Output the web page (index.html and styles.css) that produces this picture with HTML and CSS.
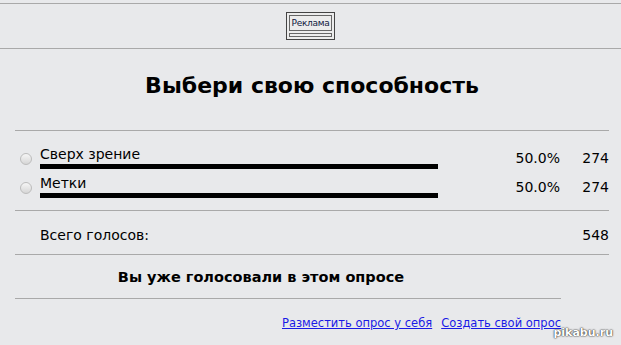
FILE: index.html
```html
<!DOCTYPE html>
<html lang="ru">
<head>
<meta charset="UTF-8">
<link rel="stylesheet" href="styles.css">
<title>Опрос</title>
</head>
<body>

<div class="ad-strip">
  <div class="ad-box">
    <div class="ad-label">Реклама</div>
    <div class="ad-bar"></div>
  </div>
</div>

<div class="poll">
  <h1 class="poll-title">Выбери свою способность</h1>

  <div class="answers">
    <div class="answer">
      <span class="radio"></span>
      <div class="answer-main">
        <div class="answer-text">Сверх зрение</div>
        <div class="bar" style="width:398px"></div>
      </div>
      <span class="percent">50.0%</span>
      <span class="count">274</span>
    </div>
    <div class="answer">
      <span class="radio"></span>
      <div class="answer-main">
        <div class="answer-text">Метки</div>
        <div class="bar" style="width:398px"></div>
      </div>
      <span class="percent">50.0%</span>
      <span class="count">274</span>
    </div>
  </div>

  <div class="total">
    <span>Всего голосов:</span>
    <span>548</span>
  </div>

  <div class="voted">
    <div class="voted-text">Вы уже голосовали в этом опросе</div>
  </div>

  <div class="links">
    <a href="#">Разместить опрос у себя</a>
    <a href="#">Создать свой опрос</a>
  </div>
</div>

<div class="watermark">pikabu.ru</div>

</body>
</html>
```

FILE: styles.css
```css
body { margin: 0; background: #e8e9eb; font-family: "DejaVu Sans", Verdana, sans-serif; color: #000; }

.ad-strip { margin-top: 3px; border-top: 1px solid #a9a9a9; border-bottom: 1px solid #a9a9a9; height: 44px; display: flex; justify-content: center; align-items: flex-start; }
.ad-box { margin-top: 8px; width: 43px; border: 1px solid #444; padding: 2px; background: #ececec; }
.ad-label { border: 1px solid #666; font-size: 9px; line-height: 14px; text-align: center; color: #101840; letter-spacing: -0.3px; }
.ad-bar { margin-top: 2px; height: 2px; border: 1px solid #666; }

.poll { margin: 0 12px 0 15px; }
.poll-title { margin: 0; height: 82px; box-sizing: border-box; padding-top: 22px; text-align: center; font-size: 22px; line-height: 30px; border-bottom: 1px solid #a9a9a9; }

.answers { padding: 15px 0 6px; border-bottom: 1px solid #a9a9a9; }
.answer { display: grid; grid-template-columns: 25px 398px 1fr 49px; align-items: start; height: 29px; }
.radio { width: 10px; height: 10px; margin: 7px 0 0 5px; border-radius: 50%; border: 1px solid #bcbcbc; background: linear-gradient(#f6f6f6, #d6d6d6); }
.answer-text { font-size: 14px; line-height: 17px; }
.bar { height: 5px; margin-top: 1px; background: #000; }
.percent, .count { font-size: 14px; line-height: 17px; padding-top: 4px; text-align: right; }

.total { display: flex; justify-content: space-between; padding: 4px 0 0 25px; height: 44px; box-sizing: border-box; align-items: center; font-size: 14px; border-bottom: 1px solid #a9a9a9; }

.voted { height: 44px; box-sizing: border-box; padding-top: 1px; width: 546px; display: flex; align-items: center; border-bottom: 1px solid #a9a9a9; }
.voted-text { width: 492px; text-align: center; font-size: 14.5px; font-weight: bold; }

.links { width: 546px; display: flex; justify-content: flex-end; gap: 9px; padding-top: 17px; font-size: 11.5px; }
.links a { color: #1a1ae6; }

.watermark { position: absolute; right: 8px; bottom: 6px; font-size: 11px; font-weight: bold; color: #fff; text-shadow: 0 0 2px #333, 0 0 1px #000; }
```
